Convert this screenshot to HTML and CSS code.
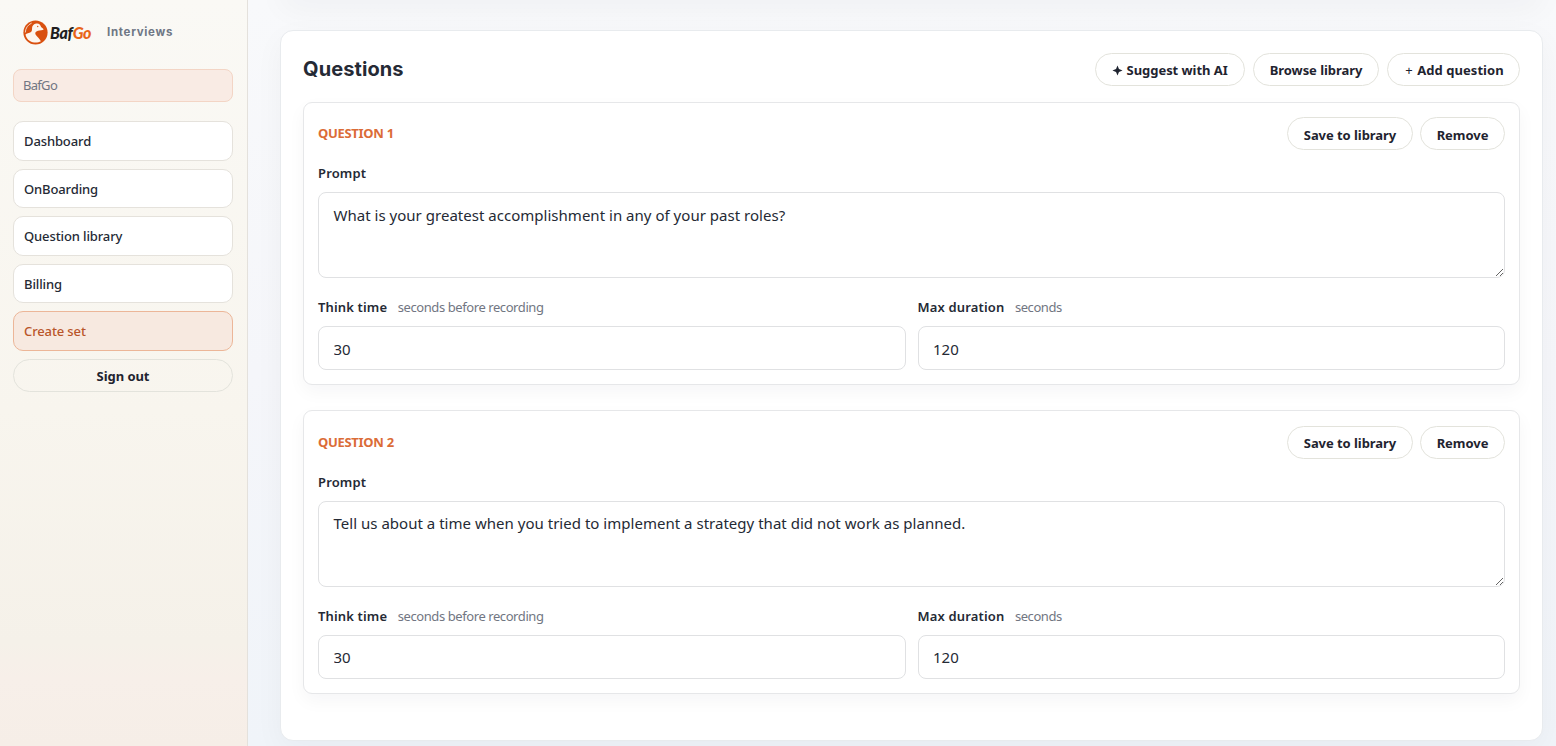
FILE: index.html
```html
<!DOCTYPE html>
<html lang="en">
<head>
    <meta charset="UTF-8">
    <meta name="viewport" content="width=device-width, initial-scale=1.0">
    <title>BafGo Interviews</title>
    <link rel="stylesheet" href="styles.css">
</head>
<body>
    <!-- Sidebar -->
    <aside class="sidebar">
        <div class="brand">
            <svg class="brand-icon" viewBox="0 0 26 26">
                <circle cx="13" cy="13" r="12.6" fill="#d9500f"/>
                <path d="M2.6 15 C3.6 13.6 6.4 13.6 8.4 12.4 C10 11.2 9 8.6 9.8 6.6 C10.8 4.4 12.6 3.4 14.6 3.6 C17 3.8 18.3 5.2 18.8 7.2 L21.6 9.6 C20.4 10.8 17.8 10.6 15.6 11.2 C13 11.9 12.2 13.6 13.2 15.4 C14.6 17.8 17.4 19.4 18.6 22 C15.8 23.8 10.8 24.1 7.2 21.9 C4.4 20 3 17.6 2.6 15 Z" fill="#fdf6ef"/>
                <path d="M2.4 13 C2.6 8.4 5 5 9 3.2" fill="none" stroke="#fdf6ef" stroke-width="0.8"/>
                <circle cx="15.3" cy="6.8" r="0.7" fill="#d9500f"/>
            </svg>
            <span class="brand-name">Baf<span class="brand-go">Go</span></span>
            <span class="brand-section">Interviews</span>
        </div>
        <div class="company">BafGo</div>
        <nav class="nav">
            <a href="#" class="nav-link">Dashboard</a>
            <a href="#" class="nav-link">OnBoarding</a>
            <a href="#" class="nav-link">Question library</a>
            <a href="#" class="nav-link">Billing</a>
            <a href="#" class="nav-link active">Create set</a>
            <button class="btn sign-out">Sign out</button>
        </nav>
    </aside>

    <!-- Main content -->
    <main class="main">
        <div class="previous-card"></div>
        <section class="card">
            <div class="card-header">
                <h2>Questions</h2>
                <div class="actions">
                    <button class="btn btn-suggest">
                        <svg class="spark" viewBox="0 0 12 12"><path d="M6 0.5 L7.6 4.4 L11.5 6 L7.6 7.6 L6 11.5 L4.4 7.6 L0.5 6 L4.4 4.4 Z"/></svg>
                        Suggest with AI
                    </button>
                    <button class="btn btn-browse">Browse library</button>
                    <button class="btn btn-add"><span class="plus">+</span> Add question</button>
                </div>
            </div>

            <div class="question">
                <div class="question-header">
                    <span class="question-title">QUESTION 1</span>
                    <div class="actions">
                        <button class="btn btn-save">Save to library</button>
                        <button class="btn btn-remove">Remove</button>
                    </div>
                </div>
                <label class="label" for="prompt1">Prompt</label>
                <textarea class="field prompt" id="prompt1">What is your greatest accomplishment in any of your past roles?</textarea>
                <div class="row">
                    <div class="col">
                        <label class="label" for="think1">Think time <span class="hint">seconds before recording</span></label>
                        <input class="field" id="think1" type="text" value="30">
                    </div>
                    <div class="col">
                        <label class="label" for="max1">Max duration <span class="hint">seconds</span></label>
                        <input class="field" id="max1" type="text" value="120">
                    </div>
                </div>
            </div>

            <div class="question">
                <div class="question-header">
                    <span class="question-title">QUESTION 2</span>
                    <div class="actions">
                        <button class="btn btn-save">Save to library</button>
                        <button class="btn btn-remove">Remove</button>
                    </div>
                </div>
                <label class="label" for="prompt2">Prompt</label>
                <textarea class="field prompt" id="prompt2">Tell us about a time when you tried to implement a strategy that did not work as planned.</textarea>
                <div class="row">
                    <div class="col">
                        <label class="label" for="think2">Think time <span class="hint">seconds before recording</span></label>
                        <input class="field" id="think2" type="text" value="30">
                    </div>
                    <div class="col">
                        <label class="label" for="max2">Max duration <span class="hint">seconds</span></label>
                        <input class="field" id="max2" type="text" value="120">
                    </div>
                </div>
            </div>
        </section>
    </main>
</body>
</html>
```
FILE: styles.css
```css
* {
    box-sizing: border-box;
}
body {
    margin: 0;
    height: 746px;
    display: flex;
    overflow: hidden;
    font-family: "Noto Sans", "Open Sans", sans-serif;
    color: #252a35;
    background: linear-gradient(180deg, #f8f9fb 0%, #f5f6fa 50%, #f0f4f9 100%);
}
.sidebar {
    width: 248px;
    padding: 19px 14px 0 13px;
    border-right: 1px solid #e4e1dc;
    background: linear-gradient(180deg, #faf9f5 0%, #f8f5ee 55%, #f5f1e9 86%, #f7efe9 91%, #f6eee7 100%);
}
.brand {
    display: flex;
    align-items: center;
    height: 27px;
    padding-left: 10px;
}
.brand-icon {
    width: 25px;
    height: 25px;
}
.brand-name {
    margin-left: 2px;
    width: 43px;
    font-family: Lato, sans-serif;
    font-size: 16px;
    font-weight: 900;
    font-style: italic;
    letter-spacing: -0.3px;
    color: #221f1f;
}
.brand-go {
    color: #e8651a;
}
.brand-section {
    margin-left: 14px;
    padding-bottom: 1px;
    font-family: Inter, sans-serif;
    font-size: 11.5px;
    font-weight: 700;
    letter-spacing: 0.7px;
    color: #6f7785;
}
.company {
    height: 33px;
    margin-top: 23px;
    padding-left: 9px;
    line-height: 31px;
    font-size: 13px;
    letter-spacing: -0.7px;
    color: #717682;
    background: #f9ebe4;
    border: 1px solid #f3d5c5;
    border-radius: 8px;
}
.nav {
    display: flex;
    flex-direction: column;
    gap: 8px;
    margin-top: 19px;
}
.nav-link {
    height: 39.5px;
    padding-left: 10px;
    line-height: 38px;
    font-size: 13px;
    font-weight: 500;
    letter-spacing: -0.12px;
    color: #252a35;
    text-decoration: none;
    background: #fff;
    border: 1px solid #e5e2dc;
    border-radius: 10px;
}
.nav-link.active {
    color: #b9552a;
    background: #f7e9e0;
    border-color: #ecb698;
}
.btn {
    height: 33px;
    padding: 1px 0 0;
    font-family: inherit;
    font-size: 13px;
    font-weight: 700;
    letter-spacing: -0.05px;
    white-space: nowrap;
    color: #1f2430;
    background: transparent;
    border: 1px solid #e3e3dc;
    border-radius: 17px;
    cursor: pointer;
}
.sign-out {
    width: 100%;
}
.main {
    flex: 1;
    min-width: 0;
    padding: 0 13px 0 32px;
}
/* bottom edge of the settings card scrolled above */
.previous-card {
    height: 30px;
    margin-top: -30px;
    margin-bottom: 30px;
    border-radius: 13px;
    box-shadow: 0 9px 30px rgba(31, 36, 48, 0.04);
}
.card {
    height: 711px;
    padding: 22px 22px 0;
    background: #fff;
    border: 1px solid #e8ebee;
    border-radius: 13px;
    box-shadow: 0 9px 30px rgba(31, 36, 48, 0.04);
}
.card-header {
    display: flex;
    justify-content: space-between;
    align-items: center;
    height: 33px;
    margin-bottom: 16px;
}
.card-header h2 {
    margin: 0;
    padding-bottom: 2px;
    font-family: Inter, sans-serif;
    font-size: 20px;
    font-weight: 700;
    letter-spacing: 0.1px;
}
.actions {
    display: flex;
    gap: 8px;
}
.spark {
    width: 11px;
    height: 11px;
    fill: #1f2430;
    vertical-align: -1px;
}
.plus {
    margin-right: 1px;
    font-weight: 400;
}
.btn-suggest {
    width: 150px;
}
.btn-browse, .btn-save {
    width: 126px;
}
.btn-add {
    width: 133px;
    padding-left: 2px;
    letter-spacing: 0.05px;
}
.btn-remove {
    width: 85px;
}
.question {
    height: 283.2px;
    padding: 14.1px 14px 14px;
    margin-bottom: 25.25px;
    border: 1px solid #e6e7e9;
    border-radius: 9px;
    background: #fff;
    box-shadow: 0 7px 18px rgba(31, 36, 48, 0.04);
}
.question-header {
    display: flex;
    justify-content: space-between;
    height: 33px;
    margin-bottom: 14px;
}
.question-header .actions {
    gap: 7px;
}
.question-header .btn {
    padding-top: 2px;
}
.question-title {
    line-height: 32px;
    font-size: 13px;
    font-weight: 700;
    letter-spacing: -0.3px;
    color: #db6c37;
}
.label {
    display: block;
    height: 20px;
    margin-bottom: 8px;
    line-height: 19.8px;
    font-size: 13px;
    font-weight: 600;
    letter-spacing: 0.15px;
    white-space: nowrap;
}
.hint {
    margin-left: 7px;
    font-weight: 400;
    letter-spacing: -0.42px;
    color: #717682;
}
.field {
    display: block;
    width: 100%;
    height: 44px;
    padding: 1.5px 14.5px 0;
    font-family: inherit;
    font-size: 15px;
    letter-spacing: 0.02px;
    color: #252a35;
    background: #fff;
    border: 1px solid #e0e1e3;
    border-radius: 8px;
    outline: none;
}
.prompt {
    height: 86px;
    padding: 10.8px 14.5px;
    line-height: 22px;
    resize: vertical;
}
.row {
    display: grid;
    grid-template-columns: 1fr 1fr;
    gap: 12px;
    margin-top: 20px;
}
```
